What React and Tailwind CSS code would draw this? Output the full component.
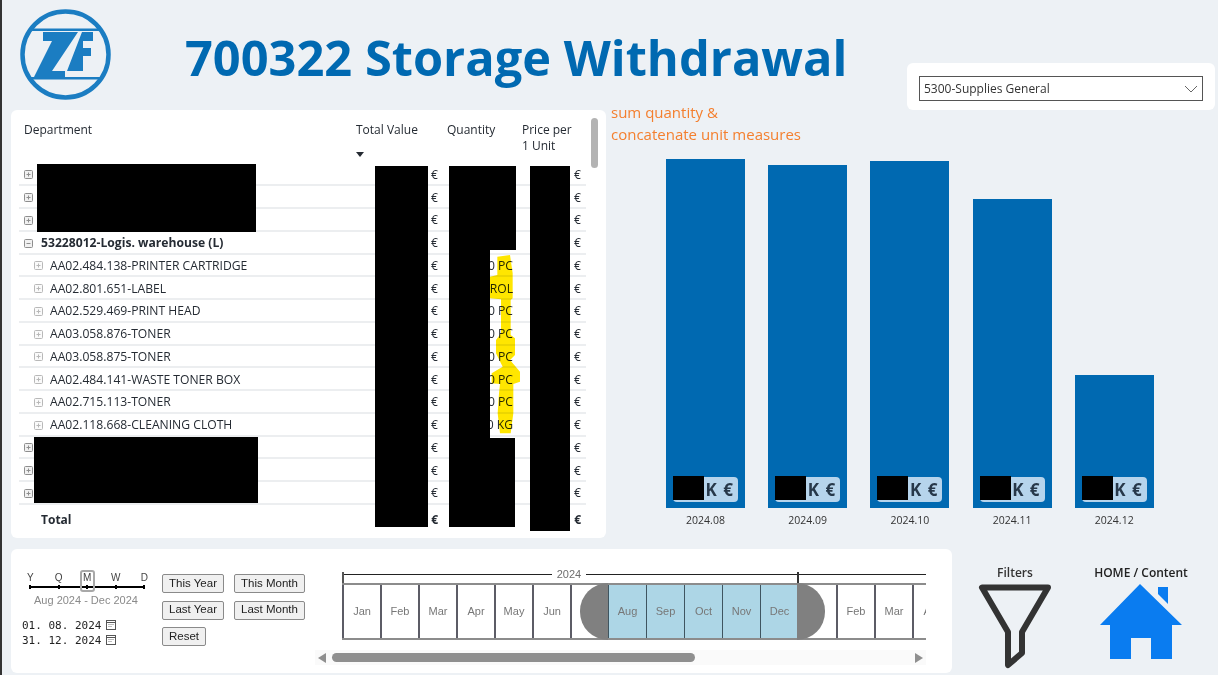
import React from "react";

// Rows of the table, level 0 = department, level 1 = material
const rows = [
  { label: "", level: 0 },
  { label: "", level: 0 },
  { label: "", level: 0 },
  { label: "53228012-Logis. warehouse (L)", level: 0, open: true },
  { label: "AA02.484.138-PRINTER CARTRIDGE", level: 1, qty: "0 PC" },
  { label: "AA02.801.651-LABEL", level: 1, qty: "ROL" },
  { label: "AA02.529.469-PRINT HEAD", level: 1, qty: "0 PC" },
  { label: "AA03.058.876-TONER", level: 1, qty: "0 PC" },
  { label: "AA03.058.875-TONER", level: 1, qty: "0 PC" },
  { label: "AA02.484.141-WASTE TONER BOX", level: 1, qty: "0 PC" },
  { label: "AA02.715.113-TONER", level: 1, qty: "0 PC" },
  { label: "AA02.118.668-CLEANING CLOTH", level: 1, qty: "0 KG" },
  { label: "", level: 0 },
  { label: "", level: 0 },
  { label: "", level: 0 },
];

const bars = [
  { month: "2024.08", height: "h-[349px]" },
  { month: "2024.09", height: "h-[343px]" },
  { month: "2024.10", height: "h-[347px]" },
  { month: "2024.11", height: "h-[309px]" },
  { month: "2024.12", height: "h-[133px]" },
];

const months = ["Jan", "Feb", "Mar", "Apr", "May", "Jun", "", "Aug", "Sep", "Oct", "Nov", "Dec", "", "Feb", "Mar", "Apr"];

function ZfLogo() {
  return (
    <svg width="100" height="100" viewBox="0 0 100 100" className="shrink-0">
      <circle cx="50.5" cy="49.5" r="43" fill="none" stroke="#1b7dc2" strokeWidth="4.5" />
      <rect x="16" y="23.5" width="69" height="2.5" fill="#1b7dc2" />
      <rect x="16" y="72" width="69" height="2.5" fill="#1b7dc2" />
      <polygon points="28,27 63,27 37,66 50,66 50,72 19,72 37,36 28,36" fill="#1b7dc2" />
      <polygon points="67,27 78,27 78,36 68,36 68,43 76,43 76,51 68,51 68,66 52,66" fill="#1b7dc2" />
    </svg>
  );
}

function ExpandIcon({ open, light }) {
  const stroke = light ? "#b8b8b8" : "#8e8e8e";
  return (
    <svg width="9" height="9" viewBox="0 0 9 9" className="shrink-0">
      <rect x="0.5" y="0.5" width="8" height="8" rx="1" fill={light ? "#fafafa" : "#f1f1f1"} stroke={stroke} />
      <path d="M2.5 4.5h4" stroke={stroke} />
      {!open && <path d="M4.5 2.5v4" stroke={stroke} />}
    </svg>
  );
}

function TableRow({ row }) {
  const sub = row.level === 1;
  return (
    <div className="relative flex items-center w-[567px] h-[22.75px] pt-[2px] border-b-2 border-[#eceef0] text-[12.15px] text-[#252b33]">
      <div className={`flex items-center w-[338px] ${sub ? "pl-[15px]" : "pl-[5px]"}`}>
        <ExpandIcon open={row.open} light={sub} />
        <span className={`whitespace-nowrap ${sub ? "ml-[7px]" : "ml-[8px]"} ${row.open ? "font-bold" : ""}`}>{row.label}</span>
      </div>
      <span className="w-[81px] text-right">€</span>
      <span className="w-[75px] text-right whitespace-nowrap">{row.qty}</span>
      <span className="w-[68px] text-right">€</span>
    </div>
  );
}

function DataTable() {
  return (
    <div className="relative w-[595px] h-[428px] ml-[9px] bg-white rounded-[6px] pl-[8px] shrink-0">
      <div className="flex h-[53.5px] pt-[12px] text-[12px] leading-[16px] text-[#252b33]">
        <div className="w-[337px] pl-[5px]">Department</div>
        <div className="w-[91px]">
          Total Value
          <svg width="8" height="5" viewBox="0 0 8 5" className="mt-[14px]">
            <path d="M0 0h8L4 5z" fill="#252b33" />
          </svg>
        </div>
        <div className="w-[75px]">Quantity</div>
        <div className="w-[60px]">Price per<br />1 Unit</div>
      </div>

      {/* yellow marker under the units */}
      <svg className="absolute left-[479px] top-[145px] mix-blend-multiply z-10" width="31" height="180" viewBox="210 45 93 540">
        <path
          d="M232 50L270 45L278 100V175L272 180V285L285 295V345L270 360L300 395V425L280 432V520L272 580H240L233 520L237 460L240 432L215 430V400L248 380L228 340V300L243 280V178L210 175V110L232 105Z"
          fill="#ffe600"
        />
      </svg>

      {rows.map((row, i) => (
        <TableRow key={i} row={row} />
      ))}
      <div className="flex items-center h-[30px] text-[12px] font-bold text-[#252b33]">
        <div className="w-[338px] pl-[22px]">Total</div>
        <span className="w-[81px] text-right">€</span>
        <span className="w-[75px]" />
        <span className="w-[68px] text-right">€</span>
      </div>

      {/* scrollbar */}
      <div className="absolute left-[580px] top-[8px] w-[7px] h-[50px] rounded-full bg-[#b3b3b3]" />
    </div>
  );
}

function Chart() {
  return (
    <div className="ml-[5px] -mt-[9px]">
      <div className="text-[15px] leading-[22px] text-[#f47f2e] h-[44px]">
        sum quantity &<br />concatenate unit measures
      </div>
      <div className="flex items-end gap-[23.2px] ml-[55px] mt-[14px] h-[349px]">
        {bars.map((bar) => (
          <div key={bar.month} className="relative w-[79px]">
            <div className={`flex items-end justify-center pb-[6px] ${bar.height} bg-[#0069b1]`}>
              <div className="flex items-center justify-end w-[65px] h-[25px] pr-[5px] rounded-[4px] bg-[#b6d4ec] text-[17px] font-bold text-[#27384a] [word-spacing:2px]">
                K €
              </div>
            </div>
            <div className="absolute top-full w-full mt-[5px] text-center text-[10.5px] leading-[14px] text-[#333]">{bar.month}</div>
            <div className="absolute bottom-[8px] left-[7px] w-[31px] h-[24px] bg-black" />
          </div>
        ))}
      </div>
    </div>
  );
}

function GranularitySlider() {
  return (
    <div className="relative w-[143px]">
      <div className="flex">
        {["Y", "Q", "M", "W", "D"].map((g) => (
          <div key={g} className="flex flex-col items-center w-[28.5px] text-[10px] leading-[12px] text-[#444]">
            {g}
            <span className="w-[2px] h-[4px] mt-[1px] bg-black" />
          </div>
        ))}
      </div>
      <div className="h-[1.5px] ml-[14px] w-[114px] -mt-[3px] bg-black" />
      <div className="absolute left-[64px] -top-[2px] w-[15px] h-[22px] rounded-[3px] border-2 border-[#a8a8a8]" />
    </div>
  );
}

function CalendarIcon() {
  return (
    <svg width="10" height="10" viewBox="0 0 10 10" className="ml-[5px] shrink-0">
      <rect x="0.5" y="0.5" width="9" height="9" fill="none" stroke="#555" />
      <path d="M0.5 2.5h9" stroke="#555" />
      <path d="M2.5 4.5h1M4.5 4.5h1M6.5 4.5h1M2.5 6.5h1M4.5 6.5h1" stroke="#777" />
    </svg>
  );
}

function QuickButton({ width, children }) {
  return (
    <button className={`${width} h-[19px] rounded-[2px] border border-[#8a8a8a] bg-[#f0f0f0] text-[11.5px] leading-none text-[#222] whitespace-nowrap`}>
      {children}
    </button>
  );
}

function Timeline() {
  return (
    <div className="ml-[10px] w-[611px] pt-[17px]">
      <div className="relative ml-[27px] overflow-hidden">
        <div className="flex h-[17px]">
          <div className="w-[210px] h-[1.5px] mt-[7.5px] bg-[#222]" />
          <div className="w-[34px] text-center text-[11px] leading-[16px] text-[#6e6e6e]">2024</div>
          <div className="flex-1 h-[1.5px] mt-[7.5px] bg-[#222]" />
        </div>
        <div className="flex h-[57px] w-[640px] border-y-2 border-[#8c8c8c]">
          {months.map((m, i) => (
            <div
              key={i}
              className={`flex items-center justify-center w-[38px] shrink-0 text-[11px] text-[#777] ${i >= 7 && i <= 11 ? "bg-[#add6e6] border-l border-[#3f5560]" : "bg-white border-l-2 border-[#5c5c66]"}`}
            >
              {m}
            </div>
          ))}
        </div>
        <div className="absolute left-0 top-[6px] w-[1.5px] h-[11px] bg-[#555]" />
        <div className="absolute left-[455px] top-[6px] w-[1.5px] h-[11px] bg-[#333]" />
        <div className="absolute left-[238px] top-[17px] w-[28px] h-[57px] rounded-l-[28px] bg-[#808080]" />
        <div className="absolute left-[455px] top-[17px] w-[28px] h-[57px] rounded-r-[28px] bg-[#808080]" />
      </div>
      <div className="flex items-center h-[15px] mt-[10px] bg-[#fafafa]">
        <svg width="8" height="10" viewBox="0 0 8 10" className="ml-[3px]"><path d="M8 0v10L0 5z" fill="#8f8f8f" /></svg>
        <div className="w-[363px] h-[9px] ml-[6px] rounded-full bg-[#8f8f8f]" />
        <svg width="8" height="10" viewBox="0 0 8 10" className="ml-auto mr-[3px]"><path d="M0 0v10l8-5z" fill="#8f8f8f" /></svg>
      </div>
    </div>
  );
}

function DateCard() {
  return (
    <div className="flex w-[941px] h-[124px] ml-[9px] bg-white rounded-[6px] shrink-0 font-['Liberation_Sans',sans-serif]">
      <div className="w-[146px] ml-[5px] pt-[23px]">
        <GranularitySlider />
        <div className="mt-[5px] ml-[18px] text-[11px] leading-[14px] text-[#8a8a8a] whitespace-nowrap">Aug 2024 - Dec 2024</div>
        <div className="ml-[6px] mt-[11px] font-['DejaVu_Sans_Mono',monospace] text-[11px] leading-[15px] text-[#222]">
          <div className="flex items-center whitespace-pre">01. 08. 2024<CalendarIcon /></div>
          <div className="flex items-center whitespace-pre">31. 12. 2024<CalendarIcon /></div>
        </div>
      </div>
      <div className="grid grid-cols-[62px_71px] gap-x-[10px] gap-y-[7.5px] content-start items-start justify-items-start pt-[25px]">
        <QuickButton width="w-[62px]">This Year</QuickButton>
        <QuickButton width="w-[71px]">This Month</QuickButton>
        <QuickButton width="w-[62px]">Last Year</QuickButton>
        <QuickButton width="w-[71px]">Last Month</QuickButton>
        <QuickButton width="w-[44px]">Reset</QuickButton>
      </div>
      <Timeline />
    </div>
  );
}

function NavButtons() {
  return (
    <div className="flex pt-[16px]">
      <div className="flex flex-col items-center w-[126px] text-[12px] leading-[16px] font-semibold text-[#333]">
        Filters
        <svg width="76" height="86" viewBox="977 583 76 86" className="mt-[2px]">
          <path d="M982 587.5H1048L1022 632V653L1008 665V632Z" fill="none" stroke="#333" strokeWidth="6" strokeLinejoin="round" />
        </svg>
      </div>
      <div className="flex flex-col items-center w-[126px] text-[12px] leading-[16px] font-semibold text-[#222] whitespace-nowrap">
        HOME / Content
        <svg width="86" height="78" viewBox="1098 583 86 78" className="mt-[2px]">
          <path d="M1140 584L1182 625H1172V659H1151V638H1131V659H1110V625H1100Z" fill="#0a7cf0" />
          <path d="M1158 587H1168V604L1158 594Z" fill="#0a7cf0" />
        </svg>
      </div>
    </div>
  );
}

export default function App() {
  return (
    <div className="relative w-[1218px] h-[675px] overflow-hidden border-l-2 border-[#333] bg-[#edf1f5] font-['Open_Sans',sans-serif]">
      <header className="flex h-[110px]">
        <div className="ml-[13px] mt-[5px]"><ZfLogo /></div>
        <h1 className="ml-[70px] mt-[26px] text-[48.75px] leading-[62px] font-bold text-[#0069b1] whitespace-nowrap">
          700322 Storage Withdrawal
        </h1>
        <div className="absolute left-[905px] top-[63px] flex items-center w-[308px] h-[47px] pt-[4px] px-[12px] rounded-[6px] bg-white">
          <div className="flex items-center justify-between w-full h-[25px] px-[4px] border border-[#555] text-[12px] text-[#333]">
            5300-Supplies General
            <svg width="14" height="8" viewBox="0 0 14 8"><path d="M1 1l6 6 6-6" fill="none" stroke="#666" /></svg>
          </div>
        </div>
      </header>

      <div className="flex h-[428px]">
        <DataTable />
        <Chart />
      </div>

      <div className="flex mt-[11px]">
        <DateCard />
        <NavButtons />
      </div>

      {/* redactions that cover the table */}
      <div className="absolute left-[35px] top-[164px] w-[219px] h-[68px] bg-black" />
      <div className="absolute left-[373px] top-[166px] w-[53px] h-[361px] bg-black" />
      <div className="absolute left-[447px] top-[166px] w-[67px] h-[84px] bg-black" />
      <div className="absolute left-[447px] top-[250px] w-[41px] h-[189px] bg-black" />
      <div className="absolute left-[447px] top-[438px] w-[66px] h-[89px] bg-black" />
      <div className="absolute left-[528px] top-[166px] w-[40px] h-[365px] bg-black" />
      <div className="absolute left-[32px] top-[437px] w-[224px] h-[66px] bg-black" />
    </div>
  );
}
